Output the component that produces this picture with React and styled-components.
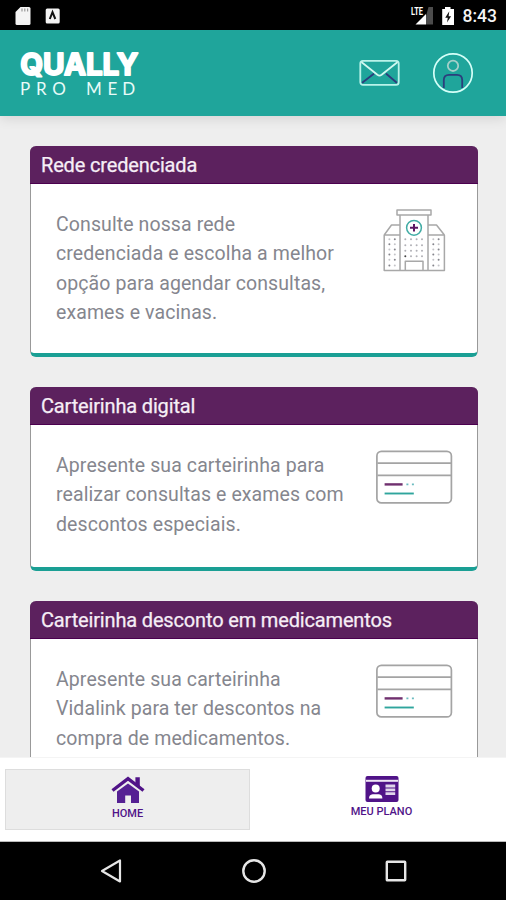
import React from 'react';
import styled, { createGlobalStyle } from 'styled-components';

const GlobalStyle = createGlobalStyle`
  * {
    box-sizing: border-box;
  }
  body {
    margin: 0;
    font-family: Roboto, "Liberation Sans", sans-serif;
  }
`;

const cards = [
  {
    title: 'Rede credenciada',
    lines: ['Consulte nossa rede', 'credenciada e escolha a melhor', 'opção para agendar consultas,', 'exames e vacinas.'],
    icon: 'hospital',
    height: 211,
  },
  {
    title: 'Carteirinha digital',
    lines: ['Apresente sua carteirinha para', 'realizar consultas e exames com', 'descontos especiais.'],
    icon: 'card',
    height: 184,
  },
  {
    title: 'Carteirinha desconto em medicamentos',
    lines: ['Apresente sua carteirinha', 'Vidalink para ter descontos na', 'compra de medicamentos.'],
    icon: 'card',
    height: 184,
  },
];

const Logo = () => (
  <svg width="128" height="66" viewBox="0 0 128 66">
    <text
      x="4.2" y="35.4" fontFamily="Inter, sans-serif" fontWeight="700" fontSize="29.5"
      fill="#fff" stroke="#fff" strokeWidth="2" strokeLinejoin="round"
      textLength="118" lengthAdjust="spacingAndGlyphs"
    >
      QUALLY
    </text>
    <text x="4 20 36.2 60 70 91.6 106.2" y="54.6" fontFamily="Lato, sans-serif" fontSize="17" fill="#e8fbf8">
      PRO MED
    </text>
  </svg>
);

const MailIcon = () => (
  <svg width="42" height="28" viewBox="0 0 42 28" fill="none" strokeLinecap="round" strokeLinejoin="round">
    <path d="M3.5 23.5 L14.5 15 M27.5 15 L37.5 23.5" stroke="#2c3d7c" strokeWidth="1.8" />
    <rect x="1.3" y="1.8" width="38.4" height="24" rx="2.6" stroke="#b9f3ea" strokeWidth="1.8" />
    <path d="M3 3.5 L18.4 15.8 Q20.5 17.3 22.6 15.8 L38 3.5" stroke="#d0f8f0" strokeWidth="1.8" />
  </svg>
);

const UserIcon = () => (
  <svg width="42" height="42" viewBox="0 0 42 42" fill="none">
    <circle cx="21" cy="21" r="19.2" stroke="#d4fff8" strokeWidth="1.7" />
    <circle cx="21" cy="13.8" r="5.2" stroke="#a5cfc9" strokeWidth="1.8" />
    <path d="M11.8 36 V28 Q11.8 22.8 17 22.8 H25 Q30.2 22.8 30.2 28 V36" stroke="#2c3d7c" strokeWidth="1.8" />
  </svg>
);

const HospitalIcon = () => {
  const dots = [];
  [30.2, 35.3, 40.6, 45.6, 50.8, 56.5].forEach((y, row) => {
    [6.4, 11.8, 50.3, 55.6].forEach((x, col) => {
      dots.push(<circle key={`s${x}-${y}`} cx={x} cy={y} r={1} fill={(row + col) % 2 ? '#85858c' : '#c4c4c8'} />);
    });
  });
  [30.2, 36.2, 41.8, 47.2].forEach((y) => {
    [22.3, 28, 33.6, 39].forEach((x) => {
      dots.push(<circle key={`m${x}-${y}`} cx={x} cy={y} r={1} fill={x < 23 && y > 47 ? '#444' : '#b0b0b6'} />);
    });
  });
  return (
    <svg width="64" height="64" viewBox="0 0 64 64" fill="none">
      <g stroke="#a8a8a8" strokeWidth="1.5" strokeLinejoin="round">
        <path d="M17 26 H1.2 V61.4 H61.4 V26 H45 M1.2 26 L8.5 16 H17 M45 16 H53.5 L61.4 26" />
        <path d="M17 6 V61.2 M45 6 V61.2" />
        <rect x="14" y="1" width="34" height="5" />
        <path d="M22.3 61 V52.2 H40 V61" />
      </g>
      <circle cx="31" cy="18.8" r="7.4" stroke="#42aca5" strokeWidth="1.5" />
      <path d="M31 15 V22.6 M27 18.8 H35" stroke="#5c1763" strokeWidth="2" />
      {dots}
    </svg>
  );
};

const CardIcon = () => (
  <svg width="78" height="56" viewBox="0 0 78 56" fill="none">
    <rect x="1.9" y="1.4" width="74.5" height="51.5" rx="4.5" stroke="#a4a4a4" strokeWidth="1.7" />
    <path d="M2.4 13.2 H76 M2.4 25.4 H76" stroke="#a4a4a4" strokeWidth="1.7" />
    <path d="M9.6 34.4 H27.6" stroke="#70306f" strokeWidth="2.4" />
    <path d="M31.4 34.4 H33.4 M36.9 34.4 H38.9" stroke="#6cbcc0" strokeWidth="1.9" />
    <path d="M9.6 43.5 H38.8" stroke="#2fa59d" strokeWidth="1.9" />
  </svg>
);

const HomeIcon = () => (
  <svg width="34" height="28" viewBox="0 0 34 28">
    <path d="M1.5 14.5 L17 2.7 L32.5 14.5" fill="none" stroke="#501388" strokeWidth="3.4" />
    <path d="M24.4 1.3 H28.8 V11 L24.4 8 Z" fill="#501388" />
    <path d="M6 15.6 L17 7.4 L28 15.6 V27 H20 V19.4 H14.2 V27 H6 Z" fill="#552093" />
  </svg>
);

const PlanIcon = () => (
  <svg width="34" height="28" viewBox="0 0 34 28">
    <rect x="0.5" y="1" width="33" height="26" rx="2" fill="#501388" />
    <path d="M1 5.8 H33" stroke="#efe6f5" strokeWidth="2" />
    <circle cx="10.7" cy="13.6" r="4" fill="#fff" />
    <path d="M4 23.5 Q4 19.8 7.6 19.3 H14 Q17.4 19.8 17.4 23.5 Z" fill="#fff" />
    <path d="M20.5 11 H30.2 M20.5 14.8 H30.2 M20.5 18.6 H30.2" stroke="#e0d5eb" strokeWidth="2.8" />
  </svg>
);

function App() {
  return (
    <Screen>
      <GlobalStyle />
      <StatusBar>
        <svg width="48" height="20" viewBox="0 0 48 20">
          <path d="M5.5 1 H14 Q15.5 1 15.5 2.5 V17.5 Q15.5 19 14 19 H2 Q.5 19 .5 17.5 V6 Z" fill="#f4f4f4" />
          <path d="M7 2.6 V5.5 M9.8 2.6 V5.5 M12.6 2.6 V5.5" stroke="#999" strokeWidth="1.2" />
          <rect x="30.7" y="2.4" width="14" height="15" rx="1.5" fill="#f4f4f4" />
          <path d="M34.8 13 L37.5 6.2 L40.3 13" fill="none" stroke="#111" strokeWidth="2" />
        </svg>
        <StatusRight>
          <svg width="46" height="20" viewBox="0 0 46 20">
            <path d="M18.5 1 H23 V18.5 H16 V10 Z" fill="#4c4c4c" />
            <path d="M16 8 V18.5 H5.5 Z" fill="#fff" />
            <text x="1" y="9.2" fontFamily="Roboto, sans-serif" fontWeight="700" fontSize="10" fill="#fff" textLength="12" lengthAdjust="spacingAndGlyphs">LTE</text>
            <path d="M35 1 H40.5 V3 H44 V19 H32.2 V3 H35 Z" fill="#fff" />
            <path d="M39.3 5.3 L35.2 11.7 H37.8 L37 16.6 L41.1 10.2 H38.6 Z" fill="#111" />
          </svg>
          <Clock>8:43</Clock>
        </StatusRight>
      </StatusBar>
      <Header>
        <Logo />
        <HeaderActions>
          <MailIcon />
          <UserIcon />
        </HeaderActions>
      </Header>
      <Content>
        {cards.map((card) => (
          <Card key={card.title} $height={card.height}>
            <CardTitle>{card.title}</CardTitle>
            <CardBody>
              <CardText>
                {card.lines.map((line) => <span key={line}>{line}</span>)}
              </CardText>
              <IconBox $hospital={card.icon === 'hospital'}>
                {card.icon === 'hospital' ? <HospitalIcon /> : <CardIcon />}
              </IconBox>
            </CardBody>
          </Card>
        ))}
      </Content>
      <TabBar>
        <Tab $active><HomeIcon />HOME</Tab>
        <Tab><PlanIcon />MEU PLANO</Tab>
      </TabBar>
      <NavBar>
        <svg width="24" height="26" viewBox="0 0 24 26">
          <path d="M3 13 L21 2.5 V23.5 Z" fill="none" stroke="#e6e6e6" strokeWidth="2.2" strokeLinejoin="round" />
        </svg>
        <svg width="26" height="26" viewBox="0 0 26 26">
          <circle cx="13" cy="13" r="10.7" fill="none" stroke="#e6e6e6" strokeWidth="2.4" />
        </svg>
        <svg width="24" height="26" viewBox="0 0 24 26">
          <rect x="2.8" y="3.8" width="18.4" height="18.4" rx="0.5" fill="none" stroke="#e6e6e6" strokeWidth="2.4" />
        </svg>
      </NavBar>
    </Screen>
  );
}

export default App;

const Screen = styled.div`
  display: flex;
  flex-direction: column;
  width: 506px;
  height: 900px;
  overflow: hidden;
  background: #eee;
`;

const StatusBar = styled.div`
  display: flex;
  flex: none;
  justify-content: space-between;
  align-items: center;
  height: 30px;
  padding: 1px 9px 0 15px;
  background: #000;
`;

const StatusRight = styled.div`
  display: flex;
  align-items: center;
  gap: 7px;
`;

const Clock = styled.span`
  color: #f4f4f4;
  font-size: 17.5px;
  font-weight: 500;
  line-height: 20px;
`;

const Header = styled.header`
  display: flex;
  flex: none;
  z-index: 1;
  justify-content: space-between;
  align-items: center;
  height: 86px;
  padding: 0 32px 0 16px;
  background: #1fa59b;
  box-shadow: 0 2px 12px rgba(0, 0, 0, 0.12);
`;

const HeaderActions = styled.div`
  display: flex;
  align-items: center;
  gap: 31px;
`;

const Content = styled.main`
  display: flex;
  flex: 1;
  flex-direction: column;
  gap: 30px;
  min-height: 0;
  padding: 30px 28px 0 30px;
  overflow: hidden;
`;

const Card = styled.section`
  flex: none;
  height: ${(props) => props.$height}px;
  border: solid #999;
  border-width: 0 1px 4px 1px;
  border-bottom-color: #1a9f94;
  border-radius: 6px;
  background: #fff;
`;

const CardTitle = styled.h2`
  height: 38px;
  margin: 0 -1px;
  padding: 0 11px;
  border-bottom: 1px solid #4b004f;
  border-radius: 6px 6px 0 0;
  background: #5c215e;
  color: #f6eef6;
  font-size: 20px;
  font-weight: 400;
  letter-spacing: -0.16px;
  line-height: 38px;
  -webkit-text-stroke: 0.25px #f6eef6;
`;

const CardBody = styled.div`
  display: flex;
  justify-content: space-between;
  padding: 25px 24px 0 25px;
`;

const CardText = styled.p`
  display: flex;
  flex-direction: column;
  margin: 1px 0 0;
  color: #85868e;
  font-size: 19.5px;
  letter-spacing: 0.1px;
  line-height: 29.4px;
  white-space: nowrap;
`;

const IconBox = styled.div`
  flex: none;
  padding-right: ${(props) => (props.$hospital ? 6 : 0)}px;
`;

const TabBar = styled.nav`
  display: flex;
  flex: none;
  gap: 9px;
  height: 85px;
  padding: 11px 0 12px 5px;
  border-top: 1px solid #f4f4f4;
  border-bottom: 1px solid #bbb;
  background: #fff;
`;

const Tab = styled.div`
  display: flex;
  flex: none;
  flex-direction: column;
  align-items: center;
  width: 245px;
  height: 61px;
  padding-top: ${(props) => (props.$active ? 6 : 5)}px;
  border: 1px solid ${(props) => (props.$active ? '#ddd' : '#fff')};
  background: ${(props) => (props.$active ? '#eee' : '#fff')};
  color: #501388;
  font-size: 11px;
  font-weight: 500;
  line-height: ${(props) => (props.$active ? 19 : 18)}px;
`;

const NavBar = styled.div`
  display: flex;
  flex: none;
  justify-content: space-between;
  align-items: center;
  height: 58px;
  padding: 0 98px 0 99px;
  background: #000;
`;
